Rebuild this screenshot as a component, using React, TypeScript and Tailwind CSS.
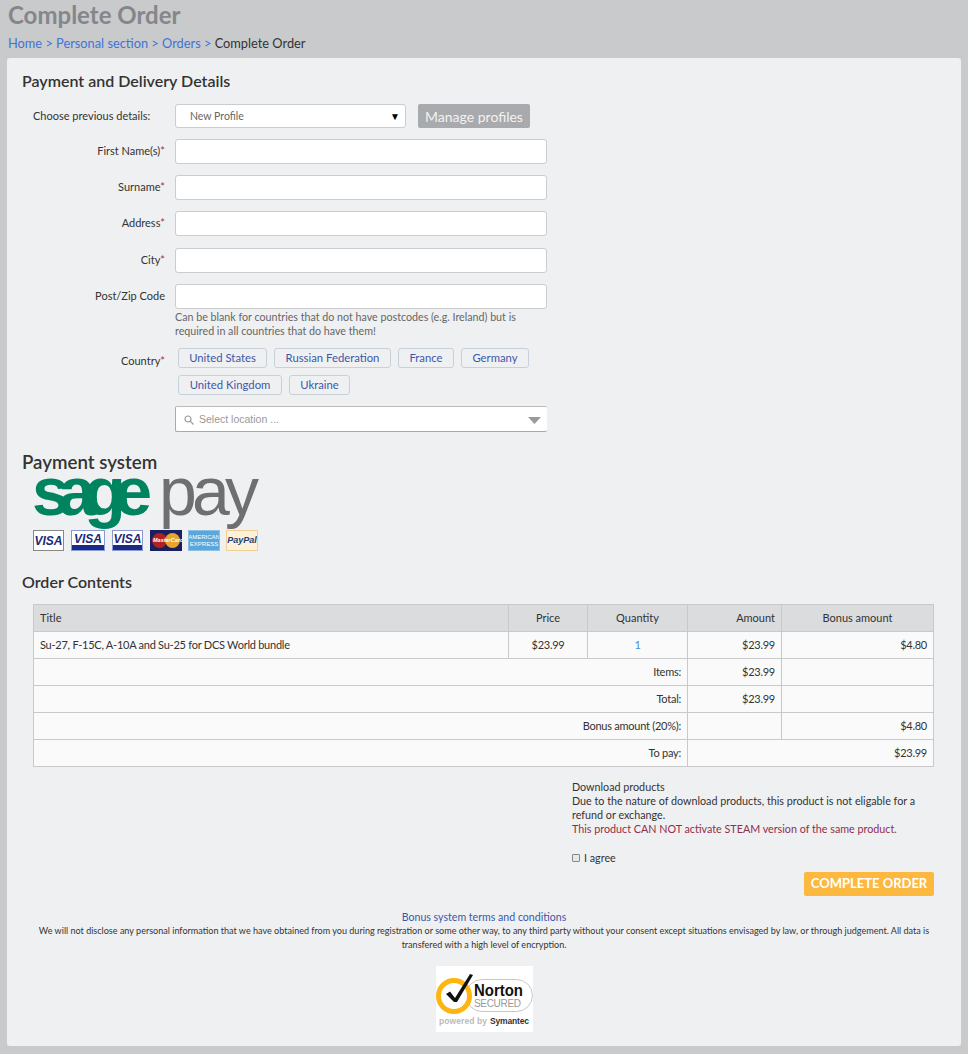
import React from "react";

const Field = ({ label, mt, req = true }: { label: string; mt: string; req?: boolean }) => (
  <div className={`flex items-center ${mt}`}>
    <label className="w-[143px] text-right text-[11px] whitespace-nowrap text-[#333]">
      {label}
      {req && <span className="text-[#a33]">*</span>}
    </label>
    <input className="ml-[10px] h-[25px] w-[372px] rounded-[3px] border border-[#ccc] bg-white" />
  </div>
);

const Chip = ({ children, w }: { children: string; w: string }) => (
  <span className={`flex h-[20px] items-center justify-center rounded-[3px] border border-[#c8d0da] text-[11.3px] whitespace-nowrap text-[#3d57a8] ${w}`}>
    {children}
  </span>
);

const Visa = ({ border, band, w }: { border: string; band?: string; w: string }) => (
  <div className={`relative flex h-[21px] items-center justify-center overflow-hidden border bg-white ${w} ${border}`}>
    <span className={`text-[12px] leading-none font-bold italic text-[#1a2a78] ${band ? "mt-[-4px]" : ""}`}>VISA</span>
    {band && <div className="absolute right-0 bottom-0 left-0 h-[5px] bg-[#1a2a8a]" />}
  </div>
);

const th = "border border-[#c8c9cb] bg-[#dbdcde] font-normal text-[11px] text-[#333] px-[6px]";
const td = "border border-[#c8c9cb] bg-[#fafafa] text-[11px] tracking-[-0.25px] text-[#333] px-[6px]";

export default function App() {
  return (
    <div className="h-[1054px] overflow-hidden bg-[#c9cacc] font-['Lato','Open_Sans',sans-serif]">
      <div className="px-[8px]">
        <h1 className="h-[30px] text-[24px] leading-[29px] font-bold whitespace-nowrap text-[#85868a]">Complete Order</h1>
        <div className="mt-[5px] h-[23px] text-[12.8px] leading-[16px] whitespace-nowrap text-[#333]">
          <span className="text-[#3f73d8]">Home &gt; Personal section &gt; Orders &gt; </span>
          Complete Order
        </div>
      </div>
      <div className="mx-[7px] h-[988px] rounded-[3px] bg-[#eff0f2] px-[15px] pt-[13px]">
        <h2 className="h-[20px] text-[16px] leading-[20px] font-semibold whitespace-nowrap text-[#333]">Payment and Delivery Details</h2>
        <div className="mt-[13px] flex items-center">
          <label className="ml-[11px] w-[132px] text-[11px] whitespace-nowrap text-[#333]">Choose previous details:</label>
          <div className="ml-[10px] flex h-[24px] w-[231px] items-center justify-between rounded-[3px] border border-[#ccc] bg-white pt-[2px] pr-[5px] pl-[14px] text-[10.5px] text-[#666]">
            New Profile
            <span className="mt-[-2px] text-[10px] text-black">▼</span>
          </div>
          <button className="ml-[12px] h-[24px] w-[112px] rounded-[2px] bg-[#a9aaad] text-[14px] whitespace-nowrap text-[#f2f2f2]">Manage profiles</button>
        </div>
        <Field label="First Name(s)" mt="mt-[11px]" />
        <Field label="Surname" mt="mt-[11px]" />
        <Field label="Address" mt="mt-[11px]" />
        <Field label="City" mt="mt-[12px]" />
        <Field label="Post/Zip Code" mt="mt-[11px]" req={false} />
        <p className="mt-[1px] ml-[153px] w-[372px] text-[10.7px] leading-[14px] text-[#666]">
          Can be blank for countries that do not have postcodes (e.g. Ireland) but is required in all countries that do have them!
        </p>
        <div className="mt-[10px] flex">
          <label className="mt-[5px] w-[143px] text-right text-[11px] text-[#333]">
            Country<span className="text-[#a33]">*</span>
          </label>
          <div className="ml-[13px] flex w-[369px] flex-wrap gap-x-[7px] gap-y-[7px]">
            <Chip w="w-[89px]">United States</Chip>
            <Chip w="w-[117px]">Russian Federation</Chip>
            <Chip w="w-[56px]">France</Chip>
            <Chip w="w-[68px]">Germany</Chip>
            <Chip w="w-[104px]">United Kingdom</Chip>
            <Chip w="w-[61px]">Ukraine</Chip>
          </div>
        </div>
        <div className="mt-[11px] ml-[153px] flex h-[26px] w-[372px] items-center justify-between rounded-[2px] border border-r-0 border-[#aaa] border-t-[#bbb] bg-white pr-[6px] pl-[8px]">
          <div className="flex items-center gap-[5px] pt-px font-['Liberation_Sans',sans-serif] text-[10.5px] text-[#999]">
            <svg width="10" height="10" viewBox="0 0 10 10" fill="none" stroke="#999" strokeWidth="1.2">
              <circle cx="4" cy="4" r="3" />
              <path d="M6.2 6.2 9.5 9.5" />
            </svg>
            Select location ...
          </div>
          <svg width="13" height="7" viewBox="0 0 13 7" className="mt-[3px]"><path d="M0 0h13L6.5 7z" fill="#9a9a9a" /></svg>
        </div>

        <h2 className="mt-[19px] h-[22px] text-[18.7px] leading-[22px] font-semibold whitespace-nowrap text-[#333]">Payment system</h2>
        <svg width="228" height="57" viewBox="0 0 228 57" className="ml-[10px] block overflow-visible">
          <text x="0" y="42" fontFamily="Liberation Sans" fontSize="68" fontWeight="700" fill="#00845f" textLength="120" lengthAdjust="spacing">sage</text>
          <text x="127" y="42" fontFamily="Liberation Sans" fontSize="68" fill="#6e6f71" textLength="100" lengthAdjust="spacing">pay</text>
        </svg>
        <div className="ml-[11px] flex gap-[7px] font-['Liberation_Sans',sans-serif]">
          <Visa w="w-[31px]" border="border-[#888]" />
          <Visa w="w-[34px]" border="border-[#8a9ad0]" band="1" />
          <Visa w="w-[31px]" border="border-[#8a9ad0]" band="1" />
          <div className="flex h-[21px] w-[32px] items-center justify-center overflow-hidden bg-[#1a1f60]">
            <div className="relative h-[15px] w-[28px]">
              <div className="absolute left-0 h-[15px] w-[15px] rounded-full bg-[#b3201f]" />
              <div className="absolute right-0 h-[15px] w-[15px] rounded-full bg-[#e8a52a]" />
              <span className="absolute top-[4px] left-[1px] text-[5.5px] leading-[7px] font-bold italic whitespace-nowrap text-white">MasterCard</span>
            </div>
          </div>
          <div className="ml-[-1px] flex h-[21px] w-[32px] items-center justify-center overflow-hidden border border-[#8fc0e4] bg-[#5ba7dc] text-center text-[6px] leading-[7px] text-white">AMERICAN EXPRESS</div>
          <div className="ml-[-1px] flex h-[21px] w-[32px] items-center justify-center overflow-hidden border border-[#f3cf96] bg-[#fdf2d8] text-[9px] font-bold italic text-[#22417c]">PayPal</div>
        </div>

        <h2 className="mt-[20px] h-[22px] text-[16px] leading-[22px] font-semibold whitespace-nowrap text-[#333]">Order Contents</h2>

        <table className="mt-[11px] ml-[11px] w-[900px] table-fixed border-collapse">
          <colgroup>
            <col className="w-[475px]" />
            <col className="w-[79px]" />
            <col className="w-[100px]" />
            <col className="w-[94px]" />
            <col className="w-[152px]" />
          </colgroup>
          <tbody>
            <tr className="h-[27px]">
              <th className={`${th} text-left`}>Title</th>
              <th className={`${th} text-center`}>Price</th>
              <th className={`${th} text-center`}>Quantity</th>
              <th className={`${th} text-right`}>Amount</th>
              <th className={`${th} text-center`}>Bonus amount</th>
            </tr>
            <tr className="h-[27px]">
              <td className={td}>Su-27, F-15C, A-10A and Su-25 for DCS World bundle</td>
              <td className={`${td} text-center`}>$23.99</td>
              <td className={`${td} text-center !text-[#3f8fd8]`}>1</td>
              <td className={`${td} text-right`}>$23.99</td>
              <td className={`${td} text-right`}>$4.80</td>
            </tr>
            <tr className="h-[27px]">
              <td colSpan={3} className={`${td} text-right`}>Items:</td>
              <td className={`${td} text-right`}>$23.99</td>
              <td className={td}></td>
            </tr>
            <tr className="h-[27px]">
              <td colSpan={3} className={`${td} text-right`}>Total:</td>
              <td className={`${td} text-right`}>$23.99</td>
              <td className={td}></td>
            </tr>
            <tr className="h-[27px]">
              <td colSpan={3} className={`${td} text-right`}>Bonus amount (20%):</td>
              <td className={td}></td>
              <td className={`${td} text-right`}>$4.80</td>
            </tr>
            <tr className="h-[27px]">
              <td colSpan={3} className={`${td} text-right`}>To pay:</td>
              <td colSpan={2} className={`${td} text-right`}>$23.99</td>
            </tr>
          </tbody>
        </table>

        <div className="mt-[13px] ml-[550px] w-[350px] text-[10.75px] leading-[14px] text-[#333]">
          <p>Download products</p>
          <p>Due to the nature of download products, this product is not eligable for a refund or exchange.</p>
          <p className="text-[#8f2f4a]">This product CAN NOT activate STEAM version of the same product.</p>
          <label className="mt-[15px] flex h-[14px] items-center gap-[4px]">
            <span className="h-[8px] w-[8px] rounded-[1px] border border-[#888] bg-[#e8e8e8]" />
            I agree
          </label>
        </div>
        <div className="mt-[7px] flex justify-end pr-[12px]">
          <button className="h-[24px] w-[130px] rounded-[2px] bg-[#fdb83f] text-[13px] font-bold whitespace-nowrap text-white">COMPLETE ORDER</button>
        </div>
        <p className="mt-[14px] text-center text-[10.6px] leading-[14px] text-[#3d57a8]">Bonus system terms and conditions</p>
        <p className="mx-auto w-[900px] text-center text-[9.05px] leading-[14px] text-[#333]">
          We will not disclose any personal information that we have obtained from you during registration or some other way, to any third party without your consent except situations envisaged by law, or through judgement. All data is transfered with a high level of encryption.
        </p>
        <div className="mx-auto mt-[14px] h-[66px] w-[97px] bg-white">
          <svg width="97" height="66" viewBox="0 0 97 66">
            <rect x="30" y="13.5" width="66.5" height="32" rx="16" fill="none" stroke="#c8c8c8" strokeWidth="1" />
            <circle cx="18" cy="30" r="15.5" fill="#fff" stroke="#fdb511" strokeWidth="5" />
            <path d="M10 28l4-2.5 5 6.5L34 8l3 1-16 27h-3z" fill="#111" />
            <text x="38" y="30" fontFamily="Liberation Sans" fontSize="17" fontWeight="700" fill="#111" textLength="49" lengthAdjust="spacingAndGlyphs">Norton</text>
            <text x="38" y="41" fontFamily="Liberation Sans" fontSize="10" fill="#999" textLength="47">SECURED</text>
            <text x="3" y="58" fontFamily="Liberation Sans" fontSize="8.5" fontWeight="700" fill="#bbb" textLength="48">powered by</text>
            <text x="54" y="58" fontFamily="Liberation Sans" fontSize="8.5" fontWeight="700" fill="#333" textLength="39">Symantec</text>
          </svg>
        </div>
      </div>
    </div>
  );
}
